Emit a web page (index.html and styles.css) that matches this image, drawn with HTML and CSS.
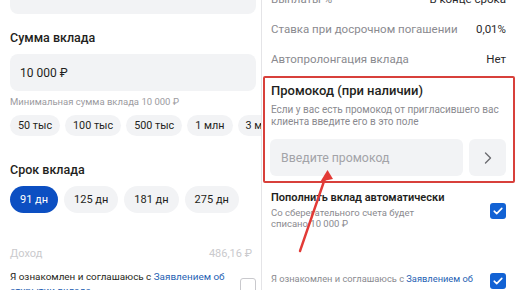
FILE: index.html
```html
<!DOCTYPE html>
<html>
	<head>
		<meta charset="UTF-8">
		<title>Открытие вклада</title>
		<link rel="stylesheet" href="styles.css">
	</head>
	<body>
		<div class="page">
			<section class="pane left">
				<div class="field top-field"></div>
				<h2 class="label">Сумма вклада</h2>
				<div class="field">10 000 ₽</div>
				<p class="hint">Минимальная сумма вклада 10 000 ₽</p>
				<div class="chips sums">
					<span class="chip">50 тыс</span>
					<span class="chip">100 тыс</span>
					<span class="chip">500 тыс</span>
					<span class="chip">1 млн</span>
					<span class="chip">3 млн</span>
				</div>
				<h2 class="label term-label">Срок вклада</h2>
				<div class="chips terms">
					<span class="chip active">91 дн</span>
					<span class="chip">125 дн</span>
					<span class="chip">181 дн</span>
					<span class="chip">275 дн</span>
				</div>
				<div class="income">
					<span>Доход</span>
					<span>486,16 ₽</span>
				</div>
				<div class="agree">
					<p>Я ознакомлен и соглашаюсь с <a href="#">Заявлением об открытии вклада</a></p>
					<span class="check"></span>
				</div>
			</section>
			<div class="divider"></div>
			<section class="pane right">
				<div class="row"><span>Выплаты %</span><b>В конце срока</b></div>
				<div class="row"><span>Ставка при досрочном погашении</span><b>0,01%</b></div>
				<div class="row"><span>Автопролонгация вклада</span><b>Нет</b></div>
				<div class="promo">
					<h3>Промокод (при наличии)</h3>
					<p>Если у вас есть промокод от пригласившего вас клиента введите его в это поле</p>
					<div class="promo-input">
						<div class="promo-field">Введите промокод</div>
						<div class="promo-btn">
							<svg width="12" height="14" viewBox="0 0 12 14"><path d="M3.5 2l5 5-5 5" fill="none" stroke="#6b6b70" stroke-width="1.4" stroke-linecap="round" stroke-linejoin="round"/></svg>
						</div>
					</div>
				</div>
				<div class="auto">
					<div>
						<h4>Пополнить вклад автоматически</h4>
						<p>Со сберегательного счета будет списано 10 000 ₽</p>
					</div>
					<span class="check on">
						<svg width="10" height="8" viewBox="0 0 10 8"><path d="M1.2 4.2l2.5 2.4L8.8 1.4" fill="none" stroke="#fff" stroke-width="1.6" stroke-linecap="round" stroke-linejoin="round"/></svg>
					</span>
				</div>
				<div class="agree agree-right">
					<p>Я ознакомлен и соглашаюсь с <a href="#">Заявлением об открытии вклада</a></p>
					<span class="check on">
						<svg width="10" height="8" viewBox="0 0 10 8"><path d="M1.2 4.2l2.5 2.4L8.8 1.4" fill="none" stroke="#fff" stroke-width="1.6" stroke-linecap="round" stroke-linejoin="round"/></svg>
					</span>
				</div>
			</section>
			<svg class="arrow" width="516" height="290" viewBox="0 0 516 290">
				<path d="M300 251L325.5 177" stroke="#e23a36" stroke-width="2.4" stroke-linecap="round"/>
				<path d="M327.5 170L320.5 181.5L333 179Z" fill="#e23a36"/>
			</svg>
		</div>
	</body>
</html>
```

FILE: styles.css
```css
body{
	margin: 0;
	font-family: Roboto, "Noto Sans", sans-serif;
	color: #1f1f21;
	background: #fff;
}
.page{
	width: 516px;
	height: 290px;
	overflow: hidden;
	position: relative;
	display: grid;
	grid-template-columns: 261px 1px 254px;
}
.divider{
	background: #e4e4e7;
}
.pane{
	overflow: hidden;
}
p, h2, h3, h4{
	margin: 0;
}
a{
	color: #1f5fb3;
	text-decoration: none;
}

/* left */
.left{
	padding-left: 10px;
}
.field{
	width: 236px;
	height: 37px;
	padding-left: 10px;
	background: #f2f3f5;
	border-radius: 8px;
	display: flex;
	align-items: center;
	font-size: 12px;
}
.top-field{
	margin-top: -23px;
}
.label{
	font-size: 12.5px;
	font-weight: 500;
	line-height: 20px;
	margin-top: 14px;
	margin-bottom: 6px;
}
.hint{
	font-size: 9.5px;
	line-height: 12px;
	color: #9b9ba0;
	margin-top: 5px;
}
.chips{
	display: flex;
	gap: 5px;
	white-space: nowrap;
}
.chip{
	flex: none;
	background: #f2f3f5;
	border-radius: 14px;
	display: flex;
	align-items: center;
}
.sums{
	margin-top: 7px;
}
.sums .chip{
	height: 21px;
	padding: 0 8px;
	font-size: 10.8px;
}
.term-label{
	margin-top: 24px;
}
.terms{
	gap: 6px;
}
.terms .chip{
	height: 27px;
	padding: 0 10px;
	font-size: 11px;
}
.chip.active{
	background: #0c4fc2;
	color: #fff;
}
.income{
	width: 242px;
	display: flex;
	justify-content: space-between;
	font-size: 11px;
	line-height: 14px;
	color: #cacacd;
	margin-top: 34px;
}
.agree{
	display: flex;
	justify-content: space-between;
	align-items: flex-start;
	width: 246px;
	margin-top: 9px;
	font-size: 9.9px;
	line-height: 14px;
}
.agree p{
	width: 228px;
}
.check{
	flex: none;
	width: 14px;
	height: 14px;
	border: 1px solid #c9c9cd;
	border-radius: 3px;
	margin-top: 8px;
	display: flex;
	align-items: center;
	justify-content: center;
}
.check.on{
	width: 16px;
	height: 16px;
	border: 0;
	background: #1262d4;
}

/* right */
.right{
	padding: 0 10px 0 9px;
}
.row{
	height: 30px;
	display: flex;
	align-items: center;
	justify-content: space-between;
	font-size: 11.5px;
	color: #8a8a8f;
}
.row:first-child{
	margin-top: -16px;
}
.row b{
	font-weight: 400;
	color: #2a2a2c;
}
.promo{
	margin: 2px -9px 0 -8px;
	padding: 4px 7px 5px 6px;
	border: 2px solid #d8403b;
	border-radius: 2px;
}
.promo h3{
	font-size: 13px;
	font-weight: 500;
	line-height: 18px;
}
.promo p{
	font-size: 10px;
	line-height: 12px;
	color: #8a8a8f;
	margin-top: 4px;
}
.promo-input{
	display: flex;
	gap: 6px;
	margin-top: 11px;
	margin-left: -1px;
}
.promo-field{
	flex: 1;
	height: 37px;
	padding-left: 11px;
	background: #f2f3f5;
	border-radius: 6px;
	display: flex;
	align-items: center;
	font-size: 12.3px;
	color: #a3a3a8;
}
.promo-btn{
	width: 37px;
	height: 37px;
	background: #f2f3f5;
	border-radius: 6px;
	display: flex;
	align-items: center;
	justify-content: center;
}
.auto{
	display: flex;
	justify-content: space-between;
	margin-top: 7px;
}
.auto h4{
	font-size: 11px;
	font-weight: 600;
	line-height: 15px;
}
.auto p{
	font-size: 9.5px;
	line-height: 10.5px;
	color: #8a8a8f;
	margin-top: 3px;
	width: 150px;
}
.auto .check{
	margin-top: 13px;
}
.agree-right{
	width: auto;
	margin-top: 43px;
	font-size: 9.3px;
	line-height: 13px;
	color: #8a8a8f;
}
.agree-right p{
	width: 216px;
}
.agree-right .check{
	margin-top: 1px;
}
.arrow{
	position: absolute;
	left: 0;
	top: 0;
	pointer-events: none;
}
```
